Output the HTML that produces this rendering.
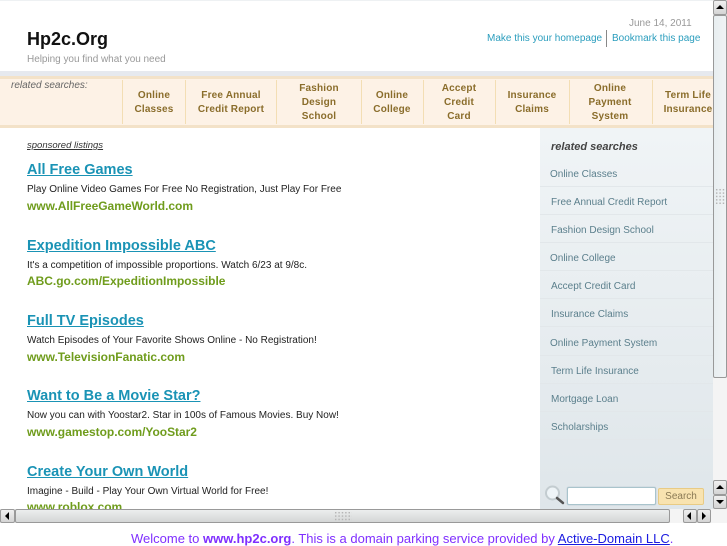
<!DOCTYPE html>
<html><head><meta charset="utf-8"><style>
html,body{margin:0;padding:0;width:727px;height:545px;overflow:hidden;background:#fff;font-family:"Liberation Sans",sans-serif}
.a{position:absolute;white-space:nowrap}
#frame{position:absolute;left:0;top:0;width:713px;height:509px;overflow:hidden;background:#fff}
.nav{position:absolute;top:81px;height:44px;text-align:center;font:bold 10px/14.3px "Liberation Sans",sans-serif;color:#8a6d2b;display:flex;align-items:center;justify-content:center;letter-spacing:.18px}
.sep{position:absolute;top:80px;width:1px;height:44px;background:#f3deb4}
.h{position:absolute;left:27px;font:bold 14.5px/18px "Liberation Sans",sans-serif;color:#1a93b5;text-decoration:underline;white-space:nowrap}
.d{position:absolute;left:27px;font:10px/13px "Liberation Sans",sans-serif;color:#222;white-space:nowrap}
.u{position:absolute;left:27px;font:bold 12px/14px "Liberation Sans",sans-serif;color:#6f9c1c;white-space:nowrap;letter-spacing:-.03px}
.s{position:absolute;left:540px;width:173px;height:28px;border-bottom:1px solid #e2e7ea;box-sizing:border-box;font:10px/13px "Liberation Sans",sans-serif;color:#5b7f8c;padding-left:10px}
.grip{position:absolute;background-image:radial-gradient(#b5b5b5 .7px,transparent .9px);background-size:3.4px 3.4px}
.btn{position:absolute;box-sizing:border-box;border:1px solid #9a9a9a;border-radius:2px;background:linear-gradient(#f0f0f0,#d4d4d4)}
.tri{position:absolute;width:0;height:0}
</style></head><body>
<div id="frame">
  <div class="a" style="left:0;top:0;width:713px;height:1px;background:#eef1f3"></div>
  <div class="a" style="left:27px;top:29px;font:bold 18px/21px 'Liberation Sans',sans-serif;color:#111">Hp2c.Org</div>
  <div class="a" style="left:27px;top:53px;font:10px/13px 'Liberation Sans',sans-serif;color:#999;letter-spacing:-.03px">Helping you find what you need</div>
  <div class="a" style="left:629px;top:17px;font:10px/13px 'Liberation Sans',sans-serif;color:#999">June 14, 2011</div>
  <div class="a" style="left:487px;top:32px;font:10px/13px 'Liberation Sans',sans-serif;color:#2a9dbd">Make this your homepage</div>
  <div class="a" style="left:606px;top:30px;width:1px;height:17px;background:#888"></div>
  <div class="a" style="left:612px;top:32px;font:10px/13px 'Liberation Sans',sans-serif;color:#2a9dbd">Bookmark this page</div>

  <div class="a" style="left:0;top:71px;width:713px;height:5px;background:#e6e9ee"></div>
  <div class="a" style="left:0;top:76px;width:713px;height:52px;box-sizing:border-box;background:#fdf2e6;border-top:3px solid #f3e2c8;border-bottom:3px solid #f3e2c8"></div>
  <div class="a" style="left:11px;top:79px;font:italic 10px/13px 'Liberation Sans',sans-serif;color:#666">related searches:</div>
  <div class="sep" style="left:122px"></div>
  <div class="nav" style="left:123px;width:62px">Online<br>Classes</div>
  <div class="sep" style="left:185px"></div>
  <div class="nav" style="left:186px;width:90px">Free Annual<br>Credit Report</div>
  <div class="sep" style="left:276px"></div>
  <div class="nav" style="left:277px;width:84px">Fashion<br>Design<br>School</div>
  <div class="sep" style="left:361px"></div>
  <div class="nav" style="left:362px;width:60px">Online<br>College</div>
  <div class="sep" style="left:423px"></div>
  <div class="nav" style="left:424px;width:70px">Accept<br>Credit<br>Card</div>
  <div class="sep" style="left:495px"></div>
  <div class="nav" style="left:496px;width:72px">Insurance<br>Claims</div>
  <div class="sep" style="left:569px"></div>
  <div class="nav" style="left:570px;width:80px">Online<br>Payment<br>System</div>
  <div class="sep" style="left:652px"></div>
  <div class="nav" style="left:653px;width:70px;overflow:visible">Term Life<br>Insurance</div>

  <div class="a" style="left:540px;top:128px;width:173px;height:381px;background:linear-gradient(#f0f4f6,#dfe6ea)"></div>
  <div class="a" style="left:551px;top:141px;font:italic bold 11px/13px 'Liberation Sans',sans-serif;color:#444">related searches</div>
  <div class="s" style="top:159px;padding-top:9px">Online Classes</div>
  <div class="s" style="top:187px;padding-top:9px;padding-left:11px">Free Annual Credit Report</div>
  <div class="s" style="top:215px;padding-top:9px;padding-left:11px">Fashion Design School</div>
  <div class="s" style="top:243px;padding-top:9px">Online College</div>
  <div class="s" style="top:271px;padding-top:9px;padding-left:11px">Accept Credit Card</div>
  <div class="s" style="top:299px;padding-top:9px;padding-left:11px">Insurance Claims</div>
  <div class="s" style="top:328px;padding-top:9px">Online Payment System</div>
  <div class="s" style="top:356px;padding-top:9px;padding-left:11px">Term Life Insurance</div>
  <div class="s" style="top:384px;padding-top:9px;padding-left:11px">Mortgage Loan</div>
  <div class="s" style="top:412px;padding-top:9px;padding-left:11px">Scholarships</div>

  <svg class="a" style="left:544px;top:484px" width="22" height="22" viewBox="0 0 22 22"><circle cx="8.5" cy="9" r="6.5" fill="#eef4f7" stroke="#c3ccd0" stroke-width="2"/><path d="M13 14l6 5" stroke="#555" stroke-width="2.5" stroke-linecap="round"/></svg>
  <div class="a" style="left:567px;top:487px;width:89px;height:18px;box-sizing:border-box;background:#fff;border:1px solid #a9c4cc;border-radius:2px;box-shadow:0 0 1px #9ab"></div>
  <div class="a" style="left:658px;top:488px;width:46px;height:17px;box-sizing:border-box;background:#f8e3b0;border:1px solid #e8cb85;border-radius:2px;text-align:center;font:10px/15px 'Liberation Sans',sans-serif;color:#8a7a55">Search</div>

  <div class="d" style="top:140px;left:27px;font:italic 9.5px/12px 'Liberation Sans',sans-serif;color:#333;text-decoration:underline">sponsored listings</div>

  <a class="h" style="top:161px">All Free Games</a>
  <div class="d" style="top:183px">Play Online Video Games For Free No Registration, Just Play For Free</div>
  <div class="u" style="top:199px">www.AllFreeGameWorld.com</div>

  <a class="h" style="top:237px">Expedition Impossible ABC</a>
  <div class="d" style="top:259px">It's a competition of impossible proportions. Watch 6/23 at 9/8c.</div>
  <div class="u" style="top:274px">ABC.go.com/ExpeditionImpossible</div>

  <a class="h" style="top:312px">Full TV Episodes</a>
  <div class="d" style="top:334px">Watch Episodes of Your Favorite Shows Online - No Registration!</div>
  <div class="u" style="top:350px">www.TelevisionFanatic.com</div>

  <a class="h" style="top:387px">Want to Be a Movie Star?</a>
  <div class="d" style="top:409px">Now you can with Yoostar2. Star in 100s of Famous Movies. Buy Now!</div>
  <div class="u" style="top:425px">www.gamestop.com/YooStar2</div>

  <a class="h" style="top:463px">Create Your Own World</a>
  <div class="d" style="top:485px">Imagine - Build - Play Your Own Virtual World for Free!</div>
  <div class="u" style="top:500px">www.roblox.com</div>
</div>

<!-- vertical scrollbar -->
<div class="a" style="left:713px;top:0;width:14px;height:523px;background:#f4f4f4"></div>
<div class="btn" style="left:713px;top:0;width:14px;height:15px"><div class="tri" style="left:2px;top:4px;border:4px solid transparent;border-bottom:4px solid #000;border-top:0"></div></div>
<div class="a" style="left:713px;top:15px;width:14px;height:363px;box-sizing:border-box;background:linear-gradient(90deg,#e8eef0,#f0f3f5);border:1px solid #999;border-radius:2px"></div>
<div class="grip" style="left:715px;top:188px;width:10px;height:17px"></div>
<div class="btn" style="left:713px;top:480px;width:14px;height:15px"><div class="tri" style="left:2px;top:4px;border:4px solid transparent;border-bottom:4px solid #000;border-top:0"></div></div>
<div class="btn" style="left:713px;top:495px;width:14px;height:14px"><div class="tri" style="left:2px;top:4px;border:4px solid transparent;border-top:4px solid #000;border-bottom:0"></div></div>

<!-- horizontal scrollbar -->
<div class="a" style="left:0;top:509px;width:713px;height:14px;background:#f4f4f4"></div>
<div class="btn" style="left:0;top:509px;width:15px;height:14px"><div class="tri" style="left:4px;top:2px;border:4px solid transparent;border-right:4px solid #000;border-left:0"></div></div>
<div class="a" style="left:15px;top:509px;width:655px;height:14px;box-sizing:border-box;background:linear-gradient(#eceeee,#d4d6d6);border:1px solid #999;border-radius:2px"></div>
<div class="grip" style="left:334px;top:511px;width:18px;height:10px"></div>
<div class="btn" style="left:683px;top:509px;width:14px;height:14px"><div class="tri" style="left:3px;top:2px;border:4px solid transparent;border-right:4px solid #000;border-left:0"></div></div>
<div class="btn" style="left:697px;top:509px;width:14px;height:14px"><div class="tri" style="left:4px;top:2px;border:4px solid transparent;border-left:4px solid #000;border-right:0"></div></div>

<div class="a" style="left:131px;top:531px;font:13px/15px 'Liberation Sans',sans-serif;color:#7f2fff">Welcome to <b>www.hp2c.org</b>. This is a domain parking service provided by <span style="color:#1a1ae0;text-decoration:underline">Active-Domain LLC</span>.</div>
</body></html>
